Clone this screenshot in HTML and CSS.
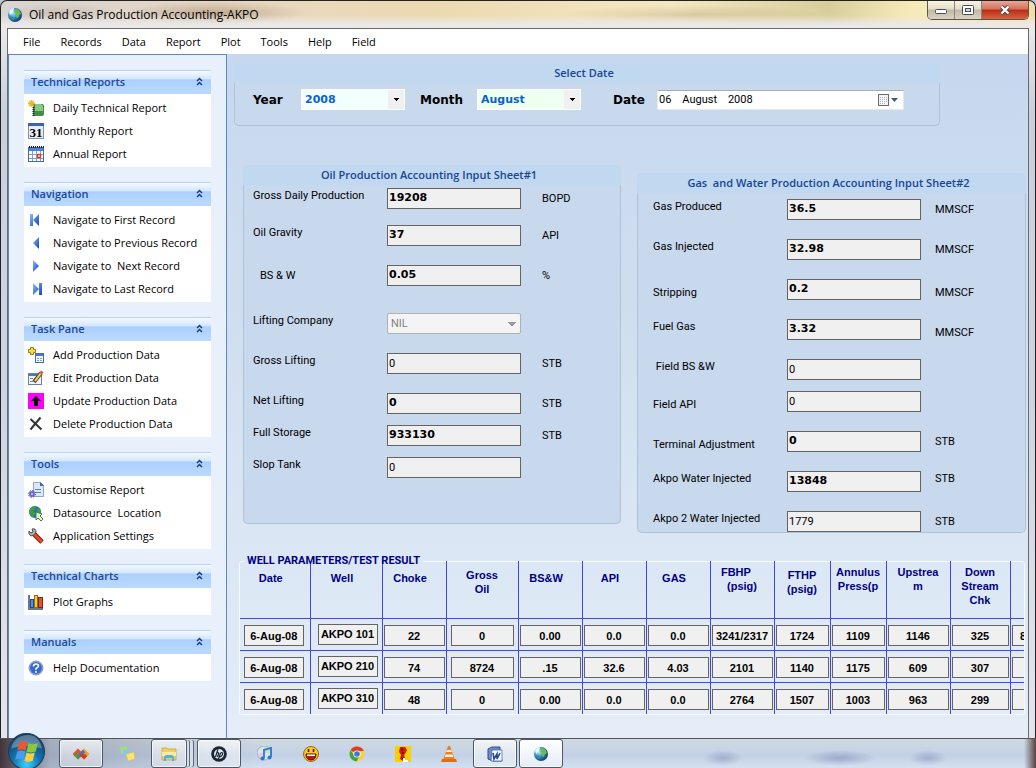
FILE: index.html
```html
<!DOCTYPE html>
<html lang="en">
  <head>
    <meta charset="utf-8">
    <title>Oil and Gas Production Accounting-AKPO</title>
    <link rel="stylesheet" href="styles.css">
  </head>

  <body>

  <!-- shared icon shapes -->
  <svg class="sprite" aria-hidden="true">
    <defs>
      <radialGradient id="sea" cx="35%" cy="35%" r="75%"><stop offset="0" stop-color="#bfe9ff"/><stop offset=".5" stop-color="#2f86d0"/><stop offset="1" stop-color="#0a2a66"/></radialGradient>
      <linearGradient id="nav" x1="0" y1="0" x2="1" y2="1"><stop offset="0" stop-color="#8fb8f8"/><stop offset="1" stop-color="#0c46b8"/></linearGradient>
      <radialGradient id="orb" cx="50%" cy="85%" r="85%"><stop offset="0" stop-color="#3fd0ff"/><stop offset=".45" stop-color="#1272ae"/><stop offset="1" stop-color="#123a5e"/></radialGradient>
      <symbol id="chevrons" viewBox="0 0 7 9"><path d="M1 4 3.5 1.500 6 4M1 8 3.500 5.500 6 8" fill="none" stroke="#173f80" stroke-width="1.500"/></symbol>
      <symbol id="globe" viewBox="0 0 16 16"><circle cx="8" cy="8" r="7" fill="url(#sea)"/><path d="M9 2l3 1 2 4-2 1-1 3-2-1V7L7 5z" fill="#6cbf3c"/><path d="M2 5c1-2 3-4 5-4L6 5 3 8z" fill="#e9f7ff"/><path d="M3 9l3 1 1 3-2 0z" fill="#3f9a4c"/></symbol>
    </defs>
  </svg>

  <div class="window">

    <header class="title-bar">
      <svg class="icon"><use href="#globe"/></svg>
      <h1>Oil and Gas Production Accounting-AKPO</h1>
      <div class="window-buttons">
        <button aria-label="Minimize"><svg width="12" height="6"><rect x=".5" y=".5" width="11" height="4" rx="1" fill="#fff" stroke="#474b60"/></svg></button>
        <button aria-label="Maximize"><svg width="12" height="10"><rect x=".5" y=".5" width="11" height="9" rx="1" fill="#fff" stroke="#474b60"/><rect x="3.500" y="3.500" width="5" height="3" fill="#d8d4d0" stroke="#474b60"/></svg></button>
        <button class="close" aria-label="Close"><svg width="12" height="10"><path d="M2.500 1.500 9.500 8.500M9.500 1.500 2.500 8.500" stroke="#5a3a40" stroke-width="4"/><path d="M2.500 1.500 9.500 8.500M9.500 1.500 2.500 8.500" stroke="#fff" stroke-width="2.400"/></svg></button>
      </div>
    </header>

    <div class="client">
      <nav class="menu">
        <a href="#">File</a>
        <a href="#">Records</a>
        <a href="#">Data</a>
        <a href="#">Report</a>
        <a href="#">Plot</a>
        <a href="#">Tools</a>
        <a href="#">Help</a>
        <a href="#">Field</a>
      </nav>

      <div class="workspace">

        <aside class="sidebar">
          <section class="panel">
            <h2>Technical Reports <svg><use href="#chevrons"/></svg></h2>
            <ul>
              <li><a href="#"><svg class="icon" viewBox="0 0 16 16"><path d="M5 4h9q2 0 2 2v8q0 2-2 2H5z" fill="#3f8f45"/><path d="M7 4h6l2 2v5H7z" fill="#86c884"/><path d="M5.500 5v11" stroke="#222" stroke-width="2" stroke-dasharray="1 1"/><path d="M3.500 0v7M0 3.500h7M1 1l5 5M6 1 1 6" stroke="#e8b820" stroke-width="1.300"/></svg>Daily Technical Report</a></li>
              <li><a href="#"><svg class="icon" viewBox="0 0 16 16"><rect x=".5" y=".5" width="15" height="15" fill="#e8eef8" stroke="#7b93b8"/><rect width="16" height="3" fill="#3c62b4"/><text x="8" y="14" class="cal-day">31</text></svg>Monthly Report</a></li>
              <li><a href="#"><svg class="icon" viewBox="0 0 16 16"><rect x=".5" y="1.500" width="15" height="14" fill="#fff" stroke="#3f68b8"/><path d="M1 2h14v3H1z" fill="#4f7fd6"/><path d="M1 1h15" stroke="#222" stroke-width="2" stroke-dasharray="1 1"/><path d="M1 8.500h14M1 12.500h14M4.500 5v10M8.500 5v10M12.500 5v10" stroke="#7f9fd4"/><rect x="9.500" y="8.500" width="3" height="3" fill="#fff" stroke="#e03a20" stroke-width="1.400"/></svg>Annual Report</a></li>
            </ul>
          </section>

          <section class="panel">
            <h2>Navigation <svg><use href="#chevrons"/></svg></h2>
            <ul>
              <li><a href="#"><svg class="icon" viewBox="0 0 16 16"><path d="M2 2h3v12H2zM11 2v12L5 8z" fill="url(#nav)"/></svg>Navigate to First Record</a></li>
              <li><a href="#"><svg class="icon" viewBox="0 0 16 16"><path d="M11 2v12L5 8z" fill="url(#nav)"/></svg>Navigate to Previous Record</a></li>
              <li><a href="#"><svg class="icon" viewBox="0 0 16 16"><path d="M5 2v12l6-6z" fill="url(#nav)"/></svg>Navigate to&nbsp; Next Record</a></li>
              <li><a href="#"><svg class="icon" viewBox="0 0 16 16"><path d="M11 2h3v12h-3zM5 2v12l6-6z" fill="url(#nav)"/></svg>Navigate to Last Record</a></li>
            </ul>
          </section>

          <section class="panel">
            <h2>Task Pane <svg><use href="#chevrons"/></svg></h2>
            <ul>
              <li><a href="#"><svg class="icon" viewBox="0 0 16 16"><path d="M2.500.5h3v2h2v3h-2v2h-3v-2h-2v-3h2z" fill="#f6dc3c" stroke="#97801c"/><rect x="7.500" y="6.500" width="8" height="9" fill="#eef4fc" stroke="#4a6ca8"/><path d="M8 7h7v2H8z" fill="#4a78c8"/><path d="M9 11.500h2M12 11.500h2M9 13.500h2M12 13.500h2" stroke="#7fa0d8"/></svg>Add Production Data</a></li>
              <li><a href="#"><svg class="icon" viewBox="0 0 16 16"><rect x=".5" y="3.500" width="13" height="11" fill="#f2f6fc" stroke="#6680a8"/><path d="M1 4h12v2H1z" fill="#4a78c8"/><path d="M2 8.500h3M2 11.500h3M6 8.500h3" stroke="#7090c8"/><path d="M6 12 13 3" stroke="#5a4a30" stroke-width="4"/><path d="M7 11 13 3" stroke="#f3cf6a" stroke-width="2"/><path d="M12.500 3.500 14.500 1.500" stroke="#d0574a" stroke-width="3"/></svg>Edit Production Data</a></li>
              <li><a href="#"><svg class="icon" viewBox="0 0 16 16"><path d="M0 0h16v16H0z" fill="#f0f"/><path d="M8 3 13 8h-3v5H6V8H3z" fill="#000"/></svg>Update Production Data</a></li>
              <li><a href="#"><svg class="icon" viewBox="0 0 16 16"><path d="M2.500 3 13.500 13.500M12.500 1.500 2.500 13.500" stroke="#333" stroke-width="2"/></svg>Delete Production Data</a></li>
            </ul>
          </section>

          <section class="panel">
            <h2>Tools <svg><use href="#chevrons"/></svg></h2>
            <ul>
              <li><a href="#"><svg class="icon" viewBox="0 0 16 16"><path d="M5.500.5h7l3 3v11h-10z" fill="#dce8fa" stroke="#90a4cc"/><path d="M12 0v4h4z" fill="#4462a0"/><path d="M7 7.500h6M7 10.500h6" stroke="#5b7cc0"/><circle cx="4" cy="12" r="2" fill="#c8c8f4" stroke="#6b6ac8" stroke-width="2"/><circle cx="4" cy="12" r="3.500" fill="none" stroke="#5554b4" stroke-dasharray="1.400 1.300"/></svg>Customise Report</a></li>
              <li><a href="#"><svg class="icon" viewBox="0 0 16 16"><circle cx="7" cy="7" r="6" fill="#3569c0"/><path d="M2 4q2-3 5-3L8 4 5 6l2 2-2 4-4-4zM9 4l3-1 1 4-3 2z" fill="#38a238"/><path d="M8 7l6 2-2 2 3 3-2 2-3-3-2 2z" fill="#dff2d8" stroke="#44803c"/></svg>Datasource&nbsp; Location</a></li>
              <li><a href="#"><svg class="icon" viewBox="0 0 16 16"><path d="M6 6 14 14" stroke="#6a1c14" stroke-width="5"/><path d="M6 6 14 14" stroke="#ee4828" stroke-width="3"/><path d="M4 1 5 4 3 5 1 3Q0 6 3 8l3-1 2-3Q8 0 4 1z" fill="#b4b4b4" stroke="#4c4c4c"/></svg>Application Settings</a></li>
            </ul>
          </section>

          <section class="panel">
            <h2>Technical Charts <svg><use href="#chevrons"/></svg></h2>
            <ul>
              <li><a href="#"><svg class="icon" viewBox="0 0 16 16"><path d="M1 1v14h14" fill="none" stroke="#68788c" stroke-width="2"/><rect x="2.500" y="5.500" width="3" height="8" fill="#5b8ae0" stroke="#244a94"/><rect x="6.500" y="1.500" width="3" height="12" fill="#f5cd38" stroke="#927010"/><rect x="10.500" y="3.500" width="4" height="10" fill="#e2542c" stroke="#842410"/></svg>Plot Graphs</a></li>
            </ul>
          </section>

          <section class="panel">
            <h2>Manuals <svg><use href="#chevrons"/></svg></h2>
            <ul>
              <li><a href="#"><svg class="icon" viewBox="0 0 16 16"><circle cx="8" cy="8" r="6.500" fill="#3468d4" stroke="#b8cdf2"/><circle cx="8" cy="8" r="7" fill="none" stroke="#3c5ca8" stroke-width=".6"/><path d="M5.500 6.500q0-2.500 2.500-2.500t2.500 2q0 1-1.500 1.800T8 10" fill="none" stroke="#fff" stroke-width="1.600"/><circle cx="8" cy="12" r="1" fill="#fff"/></svg>Help Documentation</a></li>
            </ul>
          </section>
        </aside>

        <main class="content">

          <section class="group date-group">
            <h2 class="group-title">Select Date</h2>
            <div class="group-body date-row">
              <label for="year">Year</label>
              <div class="combo combo-year">
                <select id="year"><option>2008</option></select>
              </div>
              <label for="month">Month</label>
              <div class="combo combo-month">
                <select id="month"><option>August</option></select>
              </div>
              <label for="date">Date</label>
              <div class="date-picker">
                <input id="date" type="text" value="06    August    2008">
                <button aria-label="Open calendar"><svg width="22" height="14"><rect x="1.500" y="1.500" width="10" height="11" fill="#f4f4f4" stroke="#6d6870"/><path d="M3 4.500h7M3 6.500h7M3 8.500h7M3 10.500h5" stroke="#a9b4c8" stroke-dasharray="1 1"/><path d="M14 5h7l-3.500 4z" fill="#40587c"/></svg></button>
              </div>
            </div>
          </section>

          <div class="sheets">
            <section class="group sheet sheet-oil">
              <h2 class="group-title">Oil Production Accounting Input Sheet#1</h2>
              <div class="group-body">
                <div class="field medium"><label for="gross-daily">Gross Daily Production</label><input id="gross-daily" class="strong" type="text" value="19208"><span>BOPD</span></div>
                <div class="field"><label for="gravity">Oil Gravity</label><input id="gravity" class="strong" type="text" value="37"><span>API</span></div>
                <div class="field tall"><label for="bsw" class="middle indent">BS &amp; W</label><input id="bsw" class="strong" type="text" value="0.05"><span>%</span></div>
                <div class="field"><label for="company">Lifting Company</label><div class="combo combo-off"><select id="company" disabled><option>NIL</option></select></div></div>
                <div class="field"><label for="gross-lifting">Gross Lifting</label><input id="gross-lifting" type="text" value="0"><span>STB</span></div>
                <div class="field short"><label for="net-lifting">Net Lifting</label><input id="net-lifting" class="strong" type="text" value="0"><span>STB</span></div>
                <div class="field short"><label for="storage">Full Storage</label><input id="storage" class="strong" type="text" value="933130"><span>STB</span></div>
                <div class="field short"><label for="slop">Slop Tank</label><input id="slop" type="text" value="0"></div>
              </div>
            </section>

            <section class="group sheet sheet-gas">
              <h2 class="group-title">Gas&nbsp; and Water Production Accounting Input Sheet#2</h2>
              <div class="group-body">
                <div class="field"><label for="gas-produced">Gas Produced</label><input id="gas-produced" class="strong" type="text" value="36.5"><span>MMSCF</span></div>
                <div class="field"><label for="gas-injected">Gas Injected</label><input id="gas-injected" class="strong" type="text" value="32.98"><span>MMSCF</span></div>
                <div class="field"><label for="stripping" class="low">Stripping</label><input id="stripping" class="strong" type="text" value="0.2"><span class="low">MMSCF</span></div>
                <div class="field"><label for="fuel">Fuel Gas</label><input id="fuel" class="strong" type="text" value="3.32"><span class="low">MMSCF</span></div>
                <div class="field short"><label for="field-bsw">&nbsp;Field BS &amp;W</label><input id="field-bsw" type="text" value="0"></div>
                <div class="field"><label for="field-api" class="low">Field API</label><input id="field-api" type="text" value="0"></div>
                <div class="field"><label for="terminal" class="low">Terminal Adjustment</label><input id="terminal" class="strong" type="text" value="0"><span>STB</span></div>
                <div class="field"><label for="water">Akpo Water Injected</label><input id="water" class="strong" type="text" value="13848"><span class="high">STB</span></div>
                <div class="field last"><label for="water2">Akpo 2 Water Injected</label><input id="water2" type="text" value="1779"><span>STB</span></div>
              </div>
            </section>
          </div>

          <fieldset class="wells">
            <legend>WELL PARAMETERS/TEST RESULT</legend>
            <div class="wells-clip">
              <table>
                <colgroup>
                  <col class="w70"><col class="w72"><col class="w64"><col class="w72"><col class="w64"><col class="w64"><col class="w64"><col class="w64"><col class="w56"><col class="w56"><col class="w64"><col class="w60"><col class="w60">
                </colgroup>
                <thead>
                  <tr>
                    <th>Date</th>
                    <th>Well</th>
                    <th>Choke</th>
                    <th class="two">Gross<br>Oil</th>
                    <th>BS&amp;W</th>
                    <th>API</th>
                    <th>GAS</th>
                    <th class="three">FBHP&nbsp;&nbsp;&nbsp;&nbsp;<br>(psig)</th>
                    <th class="two">FTHP<br>(psig)</th>
                    <th class="three">Annulus<br>Press(p</th>
                    <th class="three">Upstrea<br>m</th>
                    <th class="three">Down<br>Stream<br>Chk</th>
                    <th></th>
                  </tr>
                </thead>
                <tbody id="wells"></tbody>
              </table>
            </div>
          </fieldset>

        </main>
      </div>
    </div>
  </div>

  <footer class="taskbar">
    <button class="start" aria-label="Start">
      <svg viewBox="0 0 36 36"><circle cx="18" cy="18" r="17.500" fill="url(#orb)" stroke="#1d3c58"/><path d="M3 15Q6 3 18 2t15 13q-15-5-30 0z" fill="#fff" opacity=".3"/><path d="M11 9q4-2 8 0l-2 8q-4-2-8 0z" fill="#f0562c"/><path d="M20 10q4 2 9 0l-2 8q-5 2-9 0z" fill="#8cc83c"/><path d="M9 18q4-2 8 0l-2 8q-4-2-8 0z" fill="#4a9ce8"/><path d="M18 19q4 2 8 0l-2 8q-4 2-8 0z" fill="#fccf3a"/></svg>
    </button>
    <div class="tasks">
      <button class="open" aria-label="Office"><svg class="icon" viewBox="0 0 16 16"><g fill="none" stroke-width="3.400"><path d="M8 8 5 5 2 8l3 3 3-3" stroke="#e4502c"/><path d="M2 8l3 3 2-2" stroke="#4c9a3c"/><path d="M8 8l3-3 3 3-3 3-3-3" stroke="#f2a022"/><path d="M6 10l5-5" stroke="#3f78c8"/><path d="M8 8l3 3 2-2" stroke="#d8381c"/></g></svg></button>
      <button aria-label="Notes"><svg class="icon" viewBox="0 0 16 16"><path d="M1 1l7-1 1 7-7 1z" fill="#9fdc84"/><path d="M4 4l8 0v7H4z" fill="#8cc4ee"/><path d="M7 8l8-2 1 7-7 2z" fill="#fbe372" stroke="#d8b840" stroke-width=".5"/></svg></button>
      <button class="open stacked" aria-label="Explorer"><svg class="icon" viewBox="0 0 16 16"><path d="M1 2h5l1 1h8v11H1z" fill="#f2cf62" stroke="#b8922c" stroke-width=".6"/><path d="M1 6h14v4H1z" fill="#fbeaa0"/><path d="M3 15v-3q0-3 3-3h4q3 0 3 3v3h-2v-3H5v3z" fill="#4fb0e4"/></svg></button>
      <button class="open" aria-label="HP"><svg class="icon" viewBox="0 0 16 16"><circle cx="8" cy="8" r="7.800" fill="#182634"/><circle cx="8" cy="8" r="5" fill="#dfe7ee"/><path d="M7 3 4.500 11M6 7q2-1 1.500 1L6.500 11M9.500 7 7.500 13M9.500 7q3-1 2 1.500T9 10.500" stroke="#182634" stroke-width="1.200" fill="none"/></svg></button>
      <button aria-label="Music"><svg class="icon" viewBox="0 0 16 16"><circle cx="7" cy="7" r="7" fill="#dce6ee" stroke="#a0b0c0"/><path d="M7 1a6 6 0 0 1 6 6H7z" fill="#c0e4b8"/><path d="M1 7a6 6 0 0 0 6 6V7z" fill="#e4c8e8"/><path d="M7 12V4l7-2v9" fill="none" stroke="#2a78d0" stroke-width="1.800"/><circle cx="5.500" cy="12.500" r="2" fill="#2a78d0"/><circle cx="12.500" cy="11.500" r="2" fill="#2a78d0"/></svg></button>
      <button aria-label="Messenger"><svg class="icon" viewBox="0 0 16 16"><circle cx="8" cy="8" r="7.500" fill="#fbc828" stroke="#a4660c"/><path d="M3 8h10q0 6-5 6T3 8z" fill="#b01c10" stroke="#5a1408"/><path d="M4 8.500h8v1.500H4z" fill="#fff"/><path d="M5.500 3v3M10.500 3v3" stroke="#402408" stroke-width="1.600"/></svg></button>
      <button aria-label="Browser"><svg class="icon" viewBox="0 0 16 16"><circle cx="8" cy="8" r="7.500" fill="#fbd034"/><path d="M8 8 1.500 4.200A7.500 7.500 0 0 1 14.800 5H8z" fill="#e03c2c"/><path d="M1.500 4.200A7.500 7.500 0 0 0 7.500 15.500L10.500 10 5 9z" fill="#3fa648"/><circle cx="8" cy="8" r="3.600" fill="#fff"/><circle cx="8" cy="8" r="2.800" fill="#3c78d4"/></svg></button>
      <button aria-label="Updater"><svg class="icon" viewBox="0 0 16 16"><path d="M0 0h16v16H0z" fill="#fcd000"/><path d="M5 1h5l2 3-2 4-1 1 1 3-2 3-3-2 1-4-2-3z" fill="#d41c14"/><path d="M7 2v3M6 11l2 2M9 7H7" stroke="#401010"/><path d="M9 12v3h4" stroke="#fff" stroke-width="2" fill="none"/></svg></button>
      <button aria-label="Media player"><svg class="icon" viewBox="0 0 16 16"><path d="M7 0h2l5 14H2z" fill="#f0801c"/><path d="M6 4h4l1 2H5zM4.500 8.500h7l.8 2.500H3.700z" fill="#f4f0ec"/><path d="M1 13h14l1 3H0z" fill="#e46c10"/></svg></button>
      <button class="open" aria-label="Word"><svg class="icon" viewBox="0 0 16 16"><path d="M1 3l4-2h8v4l2 10H6l-5-2z" fill="#6d8cc8" stroke="#2c4c90"/><path d="M5 4h10v11H4z" fill="#f6f9ff" stroke="#3c5ca4" stroke-width=".7"/><path d="M6 7l1 6 3-5v5l3-6" stroke="#24488f" stroke-width="1.600" fill="none"/></svg></button>
      <button class="open active" aria-label="Oil and Gas Production Accounting"><svg class="icon"><use href="#globe"/></svg></button>
    </div>
  </footer>

  <script>
    // Test results, one row per well
    const wells = [
      ['6-Aug-08', 'AKPO 101', '22', '0', '0.00', '0.0', '0.0', '3241/2317', '1724', '1109', '1146', '325', '802/109'],
      ['6-Aug-08', 'AKPO 210', '74', '8724', '.15', '32.6', '4.03', '2101', '1140', '1175', '609', '307', ''],
      ['6-Aug-08', 'AKPO 310', '48', '0', '0.00', '0.0', '0.0', '2764', '1507', '1003', '963', '299', '']
    ];
    const columns = ['Date', 'Well', 'Choke', 'Gross oil', 'BS&W', 'API', 'GAS', 'FBHP', 'FTHP', 'Annulus pressure', 'Upstream', 'Down stream choke', 'Next'];

    document.querySelector('#wells').innerHTML = wells.map((row) =>
      '<tr>' + row.map((value, i) =>
        `<td><input type="text" value="${value}" aria-label="${columns[i]}"></td>`
      ).join('') + '</tr>'
    ).join('');
  </script>
  </body>
</html>
```
FILE: styles.css
```css
*{
  box-sizing: border-box;
}

body{
  margin: 0;
  min-height: 100vh;
  display: flex;
  flex-direction: column;
  font-family: "Open Sans", "Noto Sans", sans-serif;
  font-size: 11px;
  color: #000;
  background-color: #b9c8da;
  overflow: hidden;
}

h1, h2, ul{
  margin: 0;
  padding: 0;
}

a{
  color: inherit;
  text-decoration: none;
}

button{
  padding: 0;
  font: inherit;
}

input, select{
  font: inherit;
  border-radius: 0;
}

.sprite{
  position: absolute;
  width: 0;
  height: 0;
}

.icon{
  width: 16px;
  height: 16px;
  flex: none;
}

/* window frame */

.window{
  flex: 1;
  display: flex;
  flex-direction: column;
  padding: 0 6px;
  border: 1px solid #222;
  border-width: 1px 1px 0 1px;
  border-radius: 7px 7px 0 0;
  background:
    linear-gradient(transparent 14px, #ebe9e8 24px, transparent 30px),
    radial-gradient(ellipse 90px 12px at 215px 12px, rgba(120,85,55,.35), transparent),
    radial-gradient(ellipse 60px 10px at 60px 12px, rgba(140,110,90,.2), transparent),
    radial-gradient(ellipse 130px 10px at 690px 14px, rgba(150,120,80,.25), transparent),
    linear-gradient(to right, #d8d4d2, #e8d8c0 25%, #ecd9b0 42%, #f4e8c0 65%, #d8ce9c 80%, #f6ebb8 88%, #f2dca8) 0 0 / 100% 24px no-repeat,
    linear-gradient(#e8e8ea 30px, #c8d0dc 110px, #ccd6e2 400px, #e4e4ee);
}

.title-bar{
  display: flex;
  height: 27px;
  align-items: center;
}

.title-bar h1{
  flex: 1;
  margin-left: 6px;
  font-size: 12px;
  font-weight: normal;
}

.window-buttons{
  display: flex;
  align-self: flex-start;
  border: 1px solid #5a5550;
  border-top: 0;
  border-radius: 0 0 5px 5px;
  overflow: hidden;
}

.window-buttons button{
  width: 27px;
  height: 18px;
  border: 0;
  border-right: 1px solid #8a8478;
  background: linear-gradient(#f8f4e4, #e4dcc8 45%, #c2b8a4 50%, #dcd4c0);
}

.window-buttons .close{
  width: 46px;
  border-right: 0;
  background: linear-gradient(#e8a898, #d4705c 45%, #b82c14 50%, #d86440);
}

.client{
  flex: 1;
  display: flex;
  flex-direction: column;
  border: 1px solid #6a6a6a;
  border-width: 1px 1px 0 1px;
}

.menu{
  display: flex;
  gap: 20px;
  height: 25px;
  padding-left: 15px;
  align-items: center;
  background-color: white;
}

.workspace{
  flex: 1;
  display: flex;
}

/* sidebar */

.sidebar{
  flex: none;
  width: 219px;
  display: flex;
  flex-direction: column;
  gap: 15px;
  padding: 15px 15px 0 15px;
  border: 1px solid #5b88cc;
  border-bottom: 0;
  background-color: #e8f0fb;
}

.panel h2{
  display: flex;
  align-items: center;
  justify-content: space-between;
  height: 24px;
  padding: 0 8px 2px 7px;
  border-top: 1px solid #b4d4f8;
  font-size: 11px;
  font-weight: 600;
  color: #1c4a94;
  background: linear-gradient(#f4f9ff, #d4e6fe 35%, #accfff 38%, #bbdaff);
}

.panel h2 svg{
  width: 7px;
  height: 9px;
}

.panel ul{
  padding: 2px 4px;
  list-style: none;
  background-color: white;
}

.panel a{
  display: flex;
  align-items: center;
  gap: 9px;
  height: 23px;
  white-space: nowrap;
}

.cal-day{
  font: bold 13px "Liberation Serif", serif;
  text-anchor: middle;
}

/* main area */

.content{
  flex: 1;
  min-width: 0;
  padding: 9px 2px 0 7px;
  background: linear-gradient(#c6d7ee, #cddcef 25%, #d0dfef 40%, #dae6f4 70%, #e4edf8);
}

.group-title{
  height: 20px;
  padding-right: 6px;
  border-radius: 5px 5px 0 0;
  font-size: 11px;
  line-height: 20px;
  font-weight: 600;
  text-align: center;
  color: #1b4594;
  background-color: #c0d8f0;
}

.group-body{
  border: 1px solid #b0c2d6;
  border-top: 0;
  border-radius: 0 0 5px 5px;
  background-color: #c8d8ed;
}

.date-group{
  margin-right: 86px;
}

.date-row{
  display: grid;
  grid-template-columns: 48px 119px 57px 136px 44px 247px;
  align-items: center;
  padding: 6px 0 15px 18px;
  font-family: "DejaVu Sans", sans-serif;
  font-size: 12px;
  font-weight: bold;
}

.combo{
  position: relative;
  width: 104px;
  height: 21px;
}

.combo select{
  appearance: none;
  display: block;
  width: 100%;
  height: 100%;
  padding: 0 3px;
  border: 1px solid white;
  font-size: 11px;
  color: #0a62cc;
}

.combo::after{
  content: "";
  position: absolute;
  top: 1px;
  right: 1px;
  width: 16px;
  height: 19px;
  background: #f0f0f0 conic-gradient(from -45deg at 50% 100%, #000 90deg, transparent 0) 50% 50% / 5px 3px no-repeat;
  pointer-events: none;
}

.combo-year select{
  background-color: #f2fffd;
}

.combo-month select{
  background-color: #effff0;
}

.combo-off{
  width: 134px;
}

.combo-off select{
  border: 1px solid #adb2b5;
  border-radius: 2px;
  color: #838383;
  background-color: #f4f4f4;
  opacity: 1;
}

.combo-off::after{
  background: conic-gradient(from -45deg at 50% 100%, #9a9a9a 90deg, transparent 0) 50% 50% / 8px 4px no-repeat;
}

.date-picker{
  display: flex;
  height: 20px;
  padding-right: 4px;
  border: 1px solid #e3e9ef;
  border-top-color: #abadb3;
  background-color: white;
}

.date-picker input{
  flex: 1;
  min-width: 0;
  padding: 0 1px;
  border: 0;
  font: 11px Roboto, sans-serif;
  background: none;
}

.date-picker button{
  display: flex;
  align-items: center;
  border: 0;
  background: none;
}

/* input sheets */

.sheets{
  display: flex;
  align-items: flex-start;
  gap: 16px;
  margin-top: 39px;
  padding-left: 9px;
}

.sheet{
  font: 11px Roboto, sans-serif;
}

.sheet .group-title{
  font-family: "Open Sans", "Noto Sans", sans-serif;
}

.sheet-oil{
  flex: 378;
}

.sheet-oil .group-body{
  padding: 3px 0 34px 9px;
}

.sheet-gas{
  flex: 389;
  margin-top: 8px;
}

.sheet-gas .group-body{
  padding: 6px 0 0 15px;
}

.field{
  display: grid;
  grid-template-columns: 134px 134px 1fr;
  align-items: center;
  align-content: start;
  height: 40px;
  line-height: 14px;
}

.field.short{
  height: 32px;
}

.field.medium{
  height: 37px;
}

.field.tall{
  height: 48px;
}

.field.last{
  height: 21px;
}

.field label, .field span{
  padding-top: 1px;
}

.field label, .field .high{
  align-self: start;
}

.field .middle{
  align-self: center;
}

.field .low{
  align-self: end;
}

.field .indent{
  padding-left: 7px;
}

.field span{
  padding-left: 21px;
}

.sheet-gas .field span{
  padding-left: 14px;
}

.field input{
  width: 100%;
  height: 21px;
  padding: 0 1px;
  border: 1px solid #646464;
  background-color: #f0f0f0;
}

.field .strong{
  padding-bottom: 3px;
  font: bold 11px "DejaVu Sans", sans-serif;
}

/* well table */

.wells{
  min-width: 0;
  margin: 22px 1px 0 5px;
  padding: 0;
  border: 1px solid #f6f9fd;
  border-radius: 3px;
  font: bold 11px "Liberation Sans", sans-serif;
}

.wells legend{
  margin-left: 4px;
  padding: 0 3px;
  font-family: Roboto, sans-serif;
  line-height: 12px;
  color: #000080;
}

.wells-clip{
  margin-top: -6px;
  overflow: hidden;
}

.wells table{
  width: 830px;
  table-layout: fixed;
  border-collapse: collapse;
}

.w56{ width: 56px; }
.w60{ width: 60px; }
.w64{ width: 64px; }
.w70{ width: 70px; }
.w72{ width: 72px; }

.wells th{
  height: 57px;
  padding: 10px 8px 0 0;
  vertical-align: top;
  line-height: 14px;
  color: #000080;
}

.wells th.two{
  padding: 7px 0 0 0;
}

.wells th.three{
  padding: 4px 0 0 0;
}

.wells th, .wells td{
  border-right: 1px solid #4444ee;
}

.wells td{
  height: 32px;
  padding: 3px 1px 0 1px;
  border-top: 1px solid #4444ee;
}

.wells td:first-child{
  padding: 3px 6px 0 4px;
}

.wells td:nth-child(2){
  padding: 0 4px 0 7px;
}

.wells td:nth-child(4){
  padding: 3px 4px 0 4px;
}

.wells input{
  display: block;
  width: 100%;
  height: 21px;
  padding: 0;
  border: 1px solid #646464;
  text-align: center;
  background-color: #f0f0f0;
}

/* taskbar */

.taskbar{
  position: relative;
  height: 30px;
  padding-left: 59px;
  border-top: 1px solid #50545a;
  background:
    radial-gradient(ellipse 20px 8px at 723px 19px, rgba(80,90,150,.3), transparent),
    radial-gradient(ellipse 36px 8px at 840px 19px, rgba(80,90,150,.35), transparent),
    radial-gradient(ellipse 20px 8px at 928px 19px, rgba(80,90,150,.3), transparent),
    linear-gradient(to right, rgba(50,35,40,.9), rgba(90,95,115,.35) 50px, transparent 260px, transparent calc(100% - 12px), #5a4040),
    linear-gradient(#d0d9e0, #c2d1e6 55%, #d4e0f0);
}

.start{
  position: absolute;
  left: 8px;
  top: -6px;
  width: 37px;
  height: 37px;
  border: 0;
  background: none;
}

.tasks{
  display: flex;
  gap: 2px;
}

.tasks button{
  display: flex;
  align-items: center;
  justify-content: center;
  width: 44px;
  height: 29px;
  border: 1px solid transparent;
  border-radius: 3px;
  background: none;
}

.tasks .open{
  border-color: #4c5868;
  background: linear-gradient(rgba(255,255,255,.7), rgba(255,255,255,.3));
  box-shadow: inset 0 0 0 1px rgba(255,255,255,.7);
}

.tasks .stacked{
  width: 36px;
  margin-right: 8px;
  box-shadow: inset 0 0 0 1px rgba(255,255,255,.7), 3px 0 0 -1px #d6dee8, 4px 0 0 -1px #5e6a7a, 7px 0 0 -1px #d6dee8, 8px 0 0 -1px #5e6a7a;
}

.tasks .active{
  background: linear-gradient(#fff, #e4ecf6);
}
```
